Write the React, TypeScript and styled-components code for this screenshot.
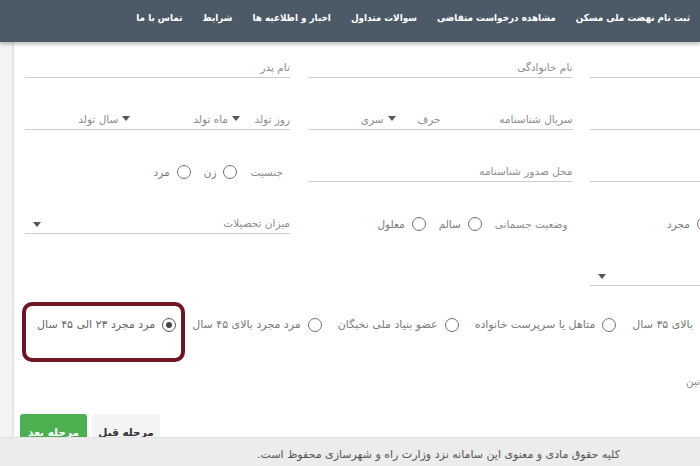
import React from "react";
import styled, { createGlobalStyle, css } from "styled-components";

const GlobalStyle = createGlobalStyle`
  html, body { margin: 0; padding: 0; background: #fff; overflow: hidden; }
  body { font-family: "DejaVu Sans", "Noto Sans", sans-serif; width: 700px; height: 466px; }
  * { box-sizing: border-box; }
`;

const Page = styled.div`
  width: 700px;
  height: 466px;
  display: flex;
  flex-direction: column;
  overflow: hidden;
`;

const Nav = styled.nav`
  height: 42px;
  flex: none;
  background: #4b5a66;
  box-shadow: 0 2px 4px rgba(0, 0, 0, 0.28);
  display: flex;
  direction: rtl;
  align-items: flex-start;
  padding: 11px 10px 0 0;
  gap: 20px;
  position: relative;
  z-index: 2;
`;

const NavItem = styled.span`
  color: #fff;
  font-family: "DejaVu Sans Condensed", "DejaVu Sans", sans-serif;
  font-size: 9.8px;
  font-weight: bold;
  white-space: nowrap;
  line-height: 14px;
`;

const Body = styled.div`
  flex: 1;
  display: flex;
  min-height: 0;
`;

const Strip = styled.div`
  width: 14px;
  flex: none;
  background: #f3f3f3;
  border-right: 2px solid #e6e6e6;
`;

const Panel = styled.div`
  flex: 1;
  overflow: hidden;
  padding: 17px 0 0 11px;
`;

const Row = styled.div<{ $mt?: number }>`
  display: grid;
  grid-template-columns: repeat(3, 265px);
  column-gap: 17.5px;
  direction: rtl;
  width: 830px;
  margin-top: ${(p) => (p.$mt ?? 0)}px;
`;

const Field = styled.div<{ $line?: boolean; $padRight?: number; $padLeft?: number }>`
  height: 18.5px;
  display: flex;
  direction: rtl;
  align-items: flex-end;
  padding: 0 ${(p) => p.$padRight ?? 0}px 3px ${(p) => p.$padLeft ?? 0}px;
  ${(p) =>
    p.$line &&
    css`
      border-bottom: 1.5px solid #cdcdcd;
    `}
`;

const Label = styled.span<{ $w?: number; $color?: string }>`
  font-size: 10.5px;
  line-height: 14px;
  color: ${(p) => p.$color ?? "#8c8c8c"};
  white-space: nowrap;
  ${(p) =>
    p.$w !== undefined &&
    css`
      width: ${p.$w}px;
      flex: none;
    `}
`;

const Spacer = styled.span<{ $w: number }>`
  width: ${(p) => p.$w}px;
  flex: none;
`;

const Select = styled.span`
  display: inline-flex;
  direction: rtl;
  align-items: center;
  gap: 4px;
  font-size: 10.5px;
  line-height: 14px;
  color: #8c8c8c;
  white-space: nowrap;
`;

const Caret = styled.span`
  width: 0;
  height: 0;
  border-left: 4px solid transparent;
  border-right: 4px solid transparent;
  border-top: 5px solid #555;
  display: inline-block;
`;

const EndCaret = styled(Caret)`
  margin-right: auto;
  margin-left: 8px;
  align-self: center;
  margin-top: 4px;
`;

const RadioGroup = styled.div<{ $gap?: number; $left?: number }>`
  display: flex;
  direction: rtl;
  align-items: center;
  gap: ${(p) => p.$gap ?? 10}px;
  white-space: nowrap;
  ${(p) =>
    p.$left !== undefined &&
    css`
      margin-right: auto;
      margin-left: ${p.$left}px;
    `}
`;

const RadioItem = styled.label<{ $highlight?: boolean; $size?: number }>`
  display: inline-flex;
  direction: rtl;
  align-items: center;
  gap: 7px;
  font-size: ${(p) => p.$size ?? 10.5}px;
  line-height: 14px;
  color: #7a7a7a;
  position: relative;
  ${(p) =>
    p.$highlight &&
    css`
      color: #666;
      &::after {
        content: "";
        position: absolute;
        left: -15px;
        right: -9px;
        top: -16px;
        bottom: -30px;
        border: 4px solid #6e1525;
        border-radius: 10px;
        pointer-events: none;
      }
    `}
`;

const Radio = styled.span<{ $checked?: boolean }>`
  width: 14px;
  height: 14px;
  flex: none;
  border-radius: 50%;
  border: 1.5px solid ${(p) => (p.$checked ? "#555" : "#6f6f6f")};
  display: inline-flex;
  align-items: center;
  justify-content: center;
  &::before {
    content: "";
    width: 6px;
    height: 6px;
    border-radius: 50%;
    background: ${(p) => (p.$checked ? "#444" : "transparent")};
  }
`;

const WideLine = styled.div<{ $mt: number; $padRight: number }>`
  direction: rtl;
  width: 830px;
  margin-top: ${(p) => p.$mt}px;
  padding-right: ${(p) => p.$padRight}px;
  display: flex;
  align-items: center;
  height: 18px;
`;

const Note = styled.div`
  margin-top: 40px;
  padding-left: 661px;
  height: 14px;
  display: flex;
`;

const NoteText = styled.span`
  direction: rtl;
  font-size: 10.5px;
  line-height: 14px;
  color: #888;
  white-space: nowrap;
`;

const Buttons = styled.div`
  margin-top: 26px;
  margin-left: -5px;
  display: flex;
  gap: 5px;
`;

const Button = styled.button<{ $primary?: boolean }>`
  height: 40px;
  width: ${(p) => (p.$primary ? 67 : 68)}px;
  border: none;
  border-radius: 3px;
  font-family: inherit;
  font-size: 10.5px;
  font-weight: bold;
  padding: 12px 0 0;
  display: flex;
  justify-content: center;
  align-items: flex-start;
  direction: rtl;
  background: ${(p) => (p.$primary ? "#4caf50" : "#f4f4f4")};
  color: ${(p) => (p.$primary ? "#fff" : "#333")};
`;

const Footer = styled.footer`
  position: fixed;
  left: 0;
  right: 0;
  bottom: 0;
  height: 29px;
  background: #ececec;
  border-top: 1px solid #e2e2e2;
  direction: rtl;
  padding: 9px 80px 0 0;
  font-size: 11px;
  line-height: 16px;
  color: #555;
  white-space: nowrap;
  z-index: 3;
`;

const navItems = [
  "ثبت نام نهضت ملی مسکن",
  "مشاهده درخواست متقاضی",
  "سوالات متداول",
  "اخبار و اطلاعیه ها",
  "شرایط",
  "تماس با ما",
];

const groups = [
  { label: "بالای ۳۵ سال", checked: false },
  { label: "متاهل یا سرپرست خانواده", checked: false },
  { label: "عضو بنیاد ملی نخبگان", checked: false },
  { label: "مرد مجرد بالای ۴۵ سال", checked: false },
  { label: "مرد مجرد ۲۳ الی ۴۵ سال", checked: true },
];

export default function App() {
  return (
    <Page>
      <GlobalStyle />
      <Nav>
        {navItems.map((n) => (
          <NavItem key={n}>{n}</NavItem>
        ))}
      </Nav>
      <Body>
        <Strip />
        <Panel>
          <Row>
            <Field $line />
            <Field $line>
              <Label>نام خانوادگی</Label>
            </Field>
            <Field $line>
              <Label>نام پدر</Label>
            </Field>
          </Row>
          <Row $mt={33.5}>
            <Field $line />
            <Field $line>
              <Label $w={95}>سریال شناسنامه</Label>
              <Spacer $w={37} />
              <Label $w={45}>حرف</Label>
              <Select>
                <Caret />
                سری
              </Select>
            </Field>
            <Field $line>
              <Label $w={50}>روز تولد</Label>
              <Select>
                <Caret />
                ماه تولد
              </Select>
              <Spacer $w={63} />
              <Select>
                <Caret />
                سال تولد
              </Select>
            </Field>
          </Row>
          <Row $mt={33.5}>
            <Field $line />
            <Field $line>
              <Label>محل صدور شناسنامه</Label>
            </Field>
            <Field $padRight={7}>
              <RadioGroup $gap={13}>
                <Label>جنسیت</Label>
                <RadioItem>
                  <Radio />
                  زن
                </RadioItem>
                <RadioItem>
                  <Radio />
                  مرد
                </RadioItem>
              </RadioGroup>
            </Field>
          </Row>
          <Row $mt={33.5}>
            <Field>
              <RadioGroup $gap={10} $left={77}>
                <RadioItem>
                  <Radio />
                  متاهل
                </RadioItem>
                <RadioItem>
                  <Radio />
                  مجرد
                </RadioItem>
              </RadioGroup>
            </Field>
            <Field $padRight={5}>
              <RadioGroup $gap={13}>
                <Label>وضعیت جسمانی</Label>
                <RadioItem>
                  <Radio />
                  سالم
                </RadioItem>
                <RadioItem>
                  <Radio />
                  معلول
                </RadioItem>
              </RadioGroup>
            </Field>
            <Field $line>
              <Label>میزان تحصیلات</Label>
              <EndCaret />
            </Field>
          </Row>
          <Row $mt={33.5}>
            <Field $line>
              <EndCaret />
            </Field>
            <div />
            <div />
          </Row>
          <WideLine $mt={30} $padRight={141}>
            <RadioGroup $gap={16}>
              {groups.map((g) => (
                <RadioItem key={g.label} $highlight={g.checked} $size={11}>
                  <Radio $checked={g.checked} />
                  {g.label}
                </RadioItem>
              ))}
            </RadioGroup>
          </WideLine>
          <Note>
            <NoteText>مطالعه و پذیرش قوانین</NoteText>
          </Note>
          <Buttons>
            <Button $primary>مرحله بعد</Button>
            <Button>مرحله قبل</Button>
          </Buttons>
        </Panel>
      </Body>
      <Footer>کلیه حقوق مادی و معنوی این سامانه نزد وزارت راه و شهرسازی محفوظ است.</Footer>
    </Page>
  );
}
